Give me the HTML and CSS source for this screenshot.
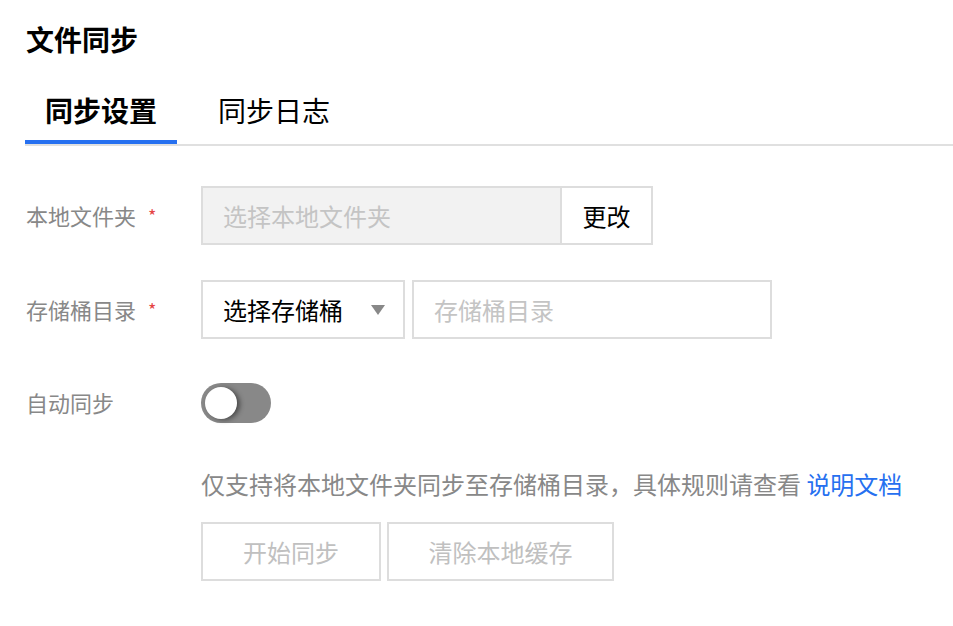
FILE: index.html
```html
<!DOCTYPE html>
<html lang="zh-CN">
<head>
<meta charset="utf-8">
<title>文件同步</title>
<link rel="stylesheet" href="styles.css">
</head>
<body>
<div class="page">
  <h1 class="title">文件同步</h1>
  <div class="tabs">
    <div class="tab tab-active">同步设置</div>
    <div class="tab">同步日志</div>
  </div>
  <div class="form">
    <div class="row row-folder">
      <div class="label">本地文件夹<span class="req">*</span></div>
      <div class="controls">
        <div class="input input-disabled input-folder">选择本地文件夹</div>
        <div class="btn btn-change">更改</div>
      </div>
    </div>
    <div class="row row-bucket">
      <div class="label">存储桶目录<span class="req">*</span></div>
      <div class="controls gap">
        <div class="select">
          <span>选择存储桶</span>
          <span class="caret"></span>
        </div>
        <div class="input input-dir">存储桶目录</div>
      </div>
    </div>
    <div class="row row-toggle">
      <div class="label">自动同步</div>
      <div class="controls">
        <div class="switch"><div class="knob"></div></div>
      </div>
    </div>
    <div class="row row-desc">
      <div class="label"></div>
      <div class="desc">仅支持将本地文件夹同步至存储桶目录，具体规则请查看 <a class="link">说明文档</a></div>
    </div>
    <div class="row row-actions">
      <div class="label"></div>
      <div class="controls actions">
        <div class="btn btn-disabled btn-start">开始同步</div>
        <div class="btn btn-disabled btn-clear">清除本地缓存</div>
      </div>
    </div>
  </div>
</div>
</body>
</html>
```

FILE: styles.css
```css
* { box-sizing: border-box; }
html, body {
  margin: 0;
  padding: 0;
  background: #fff;
}
body {
  font-family: "Noto Sans CJK SC", "Liberation Sans", sans-serif;
  color: #000;
}
.page {
  padding-left: 25px;
}
.title {
  margin: 0;
  padding-top: 21px;
  padding-left: 1px;
  font-size: 28px;
  line-height: 36px;
  font-weight: 700;
}
.tabs {
  display: flex;
  gap: 21px;
  margin-top: 23px;
  border-bottom: 2px solid #e0e0e0;
}
.tab {
  padding: 0 20px;
  height: 60px;
  line-height: 60px;
  font-size: 28px;
  color: #000;
}
.tab-active {
  font-weight: 700;
  border-bottom: 4px solid #2670f0;
  height: 64px;
  line-height: 60px;
}
.form {
  padding-top: 40px;
}
.row {
  display: flex;
  align-items: center;
}
.label {
  width: 176px;
  flex: none;
  font-size: 22px;
  color: #888;
  padding-left: 1px;
  position: relative;
  top: -1px;
}
.req {
  color: #e54545;
  margin-left: 12px;
  font-size: 18px;
  vertical-align: 2px;
}
.controls {
  display: flex;
  align-items: center;
}
.gap { gap: 7px; }
.input {
  height: 59px;
  border: 2px solid #dddddd;
  font-size: 24px;
  line-height: 55px;
  padding-left: 20px;
  color: #c4c4c4;
}
.input-disabled {
  background: #f2f2f2;
}
.input-folder { width: 361px; }
.input-dir { width: 360px; }
.btn {
  height: 59px;
  border: 2px solid #dddddd;
  font-size: 24px;
  line-height: 55px;
  text-align: center;
  color: #000;
}
.btn-change {
  width: 91px;
  border-left: 0;
}
.row-bucket { margin-top: 35px; }
.select {
  width: 204px;
  height: 59px;
  border: 2px solid #dddddd;
  display: flex;
  align-items: center;
  justify-content: space-between;
  padding: 0 18px 0 20px;
  font-size: 24px;
  color: #000;
}
.caret {
  width: 0;
  height: 0;
  border-left: 7px solid transparent;
  border-right: 7px solid transparent;
  border-top: 10px solid #888;
}
.row-toggle { margin-top: 44px; }
.switch {
  width: 70px;
  height: 40px;
  border-radius: 20px;
  background: #888888;
  padding: 4px;
}
.knob {
  width: 32px;
  height: 32px;
  border-radius: 50%;
  background: #fff;
  box-shadow: 3px 1px 5px rgba(0, 0, 0, 0.45);
}
.row-desc { margin-top: 44px; }
.desc {
  font-size: 24px;
  line-height: 34px;
  color: #888;
}
.link {
  color: #2670f0;
  text-decoration: none;
}
.row-actions { margin-top: 21px; }
.actions { gap: 6px; }
.btn-disabled {
  color: #c0c0c0;
}
.btn-start { width: 180px; }
.btn-clear { width: 227px; }
```
